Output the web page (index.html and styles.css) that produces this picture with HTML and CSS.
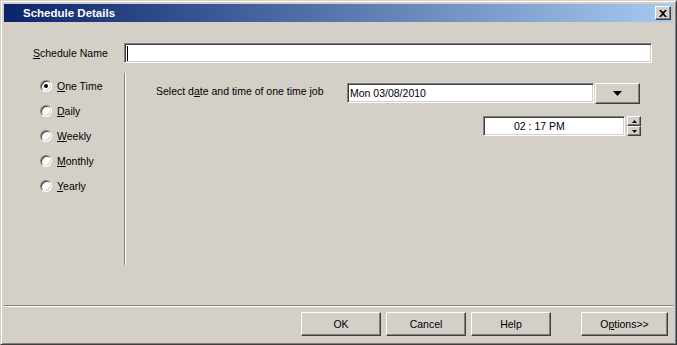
FILE: index.html
```html
<!DOCTYPE html>
<html lang="en">
<head>
    <meta charset="UTF-8">
    <title>Schedule Details</title>
    <link rel="stylesheet" href="styles.css">
</head>
<body>
    <div class="window">
        <div class="titlebar">
            <span class="title">Schedule Details</span>
            <button class="btn close">
                <svg width="8" height="7" viewBox="0 0 8 7"><path d="M0 0h2l2 2 2-2h2L5 3.5 8 7H6L4 5 2 7H0l3-3.5z" fill="#000"/></svg>
            </button>
        </div>

        <div class="content">
            <div class="name-row">
                <label class="name-label"><u>S</u>chedule Name</label>
                <div class="textbox name-input"><span class="caret"></span></div>
            </div>

            <div class="main">
                <div class="options">
                    <div class="radio-row"><span class="radio checked"></span><span><u>O</u>ne Time</span></div>
                    <div class="radio-row"><span class="radio"></span><span><u>D</u>aily</span></div>
                    <div class="radio-row"><span class="radio"></span><span><u>W</u>eekly</span></div>
                    <div class="radio-row"><span class="radio"></span><span><u>M</u>onthly</span></div>
                    <div class="radio-row"><span class="radio"></span><span><u>Y</u>early</span></div>
                </div>

                <div class="panel">
                    <div class="date-row">
                        <span class="date-label">Select d<u>a</u>te and time of one time job</span>
                        <div class="textbox date-box">Mon 03/08/2010</div>
                        <button class="btn drop">
                            <svg width="9" height="5" viewBox="0 0 9 5"><path d="M0 0h9L4.5 5z" fill="#000"/></svg>
                        </button>
                    </div>
                    <div class="time-row">
                        <div class="textbox time-box">02 : 17 PM</div>
                        <div class="spin">
                            <button class="btn spin-btn"><svg width="5" height="3" viewBox="0 0 5 3"><path d="M2.5 0L5 3H0z" fill="#000"/></svg></button>
                            <button class="btn spin-btn"><svg width="5" height="3" viewBox="0 0 5 3"><path d="M0 0h5L2.5 3z" fill="#000"/></svg></button>
                        </div>
                    </div>
                </div>
            </div>
        </div>

        <div class="footer">
            <div class="separator"></div>
            <div class="buttons">
                <button class="btn push">OK</button>
                <button class="btn push">Cancel</button>
                <button class="btn push">Help</button>
                <button class="btn push options-btn">O<u>p</u>tions&gt;&gt;</button>
            </div>
        </div>
    </div>
</body>
</html>
```

FILE: styles.css
```css
* {
    margin: 0;
    padding: 0;
    box-sizing: border-box;
}

body {
    font-family: 'Liberation Sans', Arial, sans-serif;
    font-size: 10.5px;
    color: #000;
    background: #d4d0c8;
}

.window {
    width: 677px;
    height: 345px;
    display: flex;
    flex-direction: column;
    padding: 3px;
    background: #d4d0c8;
    border: 1px solid;
    border-color: #d4d0c8 #404040 #404040 #d4d0c8;
    box-shadow: inset 1px 1px #fff, inset -1px -1px #808080;
}

/* title bar */
.titlebar {
    height: 18px;
    display: flex;
    align-items: center;
    padding: 0 2px 0 19px;
    background: linear-gradient(to right, #0a246a, #a6caf0);
}

.title {
    flex: 1;
    color: #fff;
    font-weight: bold;
    font-size: 11.5px;
}

.btn {
    display: flex;
    align-items: center;
    justify-content: center;
    background: #d4d0c8;
    border: 1px solid;
    border-color: #fff #404040 #404040 #fff;
    box-shadow: inset -1px -1px #808080;
    font-family: inherit;
    font-size: 10.5px;
    color: #000;
}

.close {
    width: 16px;
    height: 14px;
}

.textbox {
    background: #fff;
    border: 1px solid;
    border-color: #808080 #fff #fff #808080;
    box-shadow: inset 1px 1px #404040, inset -1px -1px #d4d0c8;
    display: flex;
    align-items: center;
}

/* main area */
.content {
    flex: 1;
    display: flex;
    flex-direction: column;
}

.name-row {
    display: flex;
    align-items: center;
    margin-top: 21px;
    padding-left: 29px;
}

.name-label {
    width: 91px;
}

.name-input {
    width: 528px;
    height: 20px;
}

.caret {
    width: 1px;
    height: 15px;
    margin-left: 2px;
    background: #000;
}

.main {
    display: flex;
    height: 192px;
    margin-top: 10px;
}

.options {
    width: 121px;
    padding: 0 0 0 36px;
    border-right: 1px solid #808080;
}

.radio-row {
    height: 25px;
    display: flex;
    align-items: center;
    gap: 5px;
}

.radio {
    width: 12px;
    height: 12px;
    border-radius: 50%;
    background: #fff;
    border: 1px solid;
    border-color: #808080 #fff #fff #808080;
    box-shadow: inset 1px 1px #404040, inset -1px -1px #d4d0c8;
    display: flex;
    align-items: center;
    justify-content: center;
}

.radio.checked::after {
    content: "";
    width: 4px;
    height: 4px;
    border-radius: 50%;
    background: #000;
}

.panel {
    flex: 1;
    border-left: 1px solid #fff;
    padding: 10px 0 0 30px;
}

.date-row {
    display: flex;
    align-items: flex-start;
    height: 21px;
}

.date-label {
    width: 191px;
    line-height: 15px;
    padding-top: 1px;
}

.date-box {
    width: 247px;
    height: 20px;
    padding-left: 2px;
}

.drop {
    width: 45px;
    height: 21px;
    margin-left: 1px;
}

.time-row {
    display: flex;
    margin-top: 12px;
    padding-left: 327px;
}

.time-box {
    width: 142px;
    height: 20px;
    padding-left: 30px;
}

.spin {
    display: flex;
    flex-direction: column;
    margin-left: 2px;
}

.spin-btn {
    width: 14px;
    height: 10px;
}

/* footer */
.separator {
    border-top: 1px solid #808080;
    border-bottom: 1px solid #fff;
}

.buttons {
    display: flex;
    gap: 5px;
    padding: 5px 0 5px 297px;
}

.push {
    width: 80px;
    height: 24px;
}

.options-btn {
    width: 87px;
    margin-left: 25px;
}
```
